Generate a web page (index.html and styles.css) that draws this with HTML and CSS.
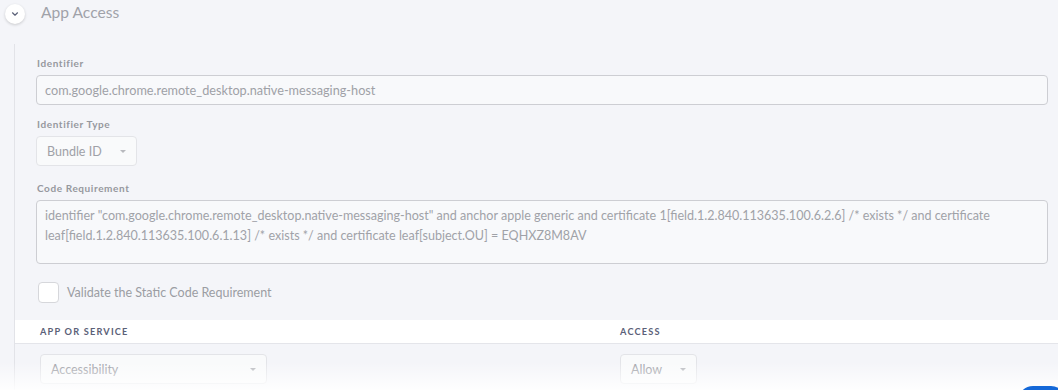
FILE: index.html
```html
<!DOCTYPE html>
<html>
<head>
<meta charset="utf-8">
<link rel="stylesheet" href="styles.css">
</head>
<body>
<div class="page">
  <div class="header">
    <div class="toggle">
      <svg width="8" height="6" viewBox="0 0 8 6"><path d="M1.5 1.8 L4 4.2 L6.5 1.8" fill="none" stroke="#5b6178" stroke-width="1.2" stroke-linecap="round" stroke-linejoin="round"/></svg>
    </div>
    <div class="title">App Access</div>
  </div>
  <div class="body">
    <div class="form">
      <div class="field">
        <div class="label">Identifier</div>
        <div class="input">com.google.chrome.remote_desktop.native-messaging-host</div>
      </div>
      <div class="field">
        <div class="label">Identifier Type</div>
        <div class="select bundle"><span>Bundle ID</span><span class="caret"></span></div>
      </div>
      <div class="field">
        <div class="label">Code Requirement</div>
        <div class="textarea">identifier "com.google.chrome.remote_desktop.native-messaging-host" and anchor apple generic and certificate 1[field.1.2.840.113635.100.6.2.6] /* exists */ and certificate leaf[field.1.2.840.113635.100.6.1.13] /* exists */ and certificate leaf[subject.OU] = EQHXZ8M8AV</div>
      </div>
      <label class="check">
        <span class="box"></span>
        <span>Validate the Static Code Requirement</span>
      </label>
    </div>
    <div class="table">
      <div class="thead">
        <div class="col1">APP OR SERVICE</div>
        <div class="col2">ACCESS</div>
      </div>
      <div class="trow">
        <div class="col1"><div class="select app"><span>Accessibility</span><span class="caret"></span></div></div>
        <div class="col2"><div class="select allow"><span>Allow</span><span class="caret"></span></div></div>
      </div>
    </div>
  </div>
  <div class="fade"></div>
  <div class="fab"></div>
</div>
</body>
</html>
```

FILE: styles.css
```css
html, body {
  margin: 0;
  padding: 0;
  background: #f4f5f9;
}
.page {
  width: 1058px;
  height: 390px;
  overflow: hidden;
  position: relative;
  font-family: Lato, "Noto Sans", sans-serif;
  color: #9a9ca3;
}
.header {
  display: flex;
  align-items: center;
  height: 26px;
  padding-left: 5px;
}
.toggle {
  width: 20px;
  height: 20px;
  border-radius: 50%;
  background: #fff;
  box-shadow: 0 1px 3px rgba(0,0,0,0.18);
  display: flex;
  align-items: center;
  justify-content: center;
  margin-top: 1px;
}
.title {
  margin-left: 16px;
  font-size: 15.6px;
  color: #a0a2a9;
  margin-top: -2px;
}
.body {
  margin-left: 14px;
  margin-top: 18px;
  border-left: 1px solid #e2e3e8;
  height: 400px;
}
.form {
  padding: 12px 10px 0 21px;
  display: flex;
  flex-direction: column;
}
.field {
  display: flex;
  flex-direction: column;
}
.label {
  font-size: 10px;
  font-weight: 700;
  letter-spacing: 0.6px;
  color: #96989e;
  height: 14px;
  line-height: 14px;
  margin-bottom: 5px;
  padding-left: 1px;
}
.input {
  height: 28px;
  border: 1px solid #cdced3;
  border-radius: 4px;
  background: #f8f9fb;
  font-size: 12.7px;
  line-height: 28px;
  padding-left: 8px;
  color: #9fa1a7;
  margin-bottom: 12px;
}
.select {
  display: flex;
  align-items: center;
  justify-content: space-between;
  height: 30px;
  border: 1px solid #e3e4e8;
  border-radius: 4px;
  background: #f9fafb;
  font-size: 12.5px;
  color: #9fa1a7;
  box-sizing: border-box;
  padding: 0 10px 0 10px;
}
.caret {
  width: 0;
  height: 0;
  border-left: 3px solid transparent;
  border-right: 3px solid transparent;
  border-top: 3px solid #b8b9be;
}
.bundle {
  width: 101px;
  margin-bottom: 15px;
}
.textarea {
  border: 1px solid #cdced3;
  border-radius: 4px;
  background: #f8f9fb;
  font-size: 12.55px;
  line-height: 20px;
  padding: 5px 14px 0 8px;
  box-sizing: border-box;
  height: 64px;
  color: #a0a2a8;
  margin-bottom: 18px;
}
.check {
  display: flex;
  align-items: center;
  font-size: 12.5px;
  color: #9b9da3;
  padding-left: 2px;
}
.box {
  width: 19px;
  height: 19px;
  border: 1px solid #d6d7db;
  border-radius: 4px;
  background: #fff;
  margin-right: 8px;
}
.table {
  margin-top: 17px;
}
.thead {
  display: flex;
  align-items: center;
  height: 23px;
  background: #fff;
  border-bottom: 1px solid #e4e5ea;
  font-size: 9.2px;
  font-weight: 700;
  letter-spacing: 1.2px;
  color: #5b6178;
}
.col1 {
  width: 580px;
  padding-left: 25px;
}
.col2 {
  flex: 1;
}
.trow {
  display: flex;
  padding-top: 10px;
}
.app {
  width: 227px;
}
.allow {
  width: 77px;
}
.fade {
  position: absolute;
  left: 0;
  right: 0;
  bottom: 0;
  height: 28px;
  background: linear-gradient(to bottom, rgba(255,255,255,0), rgba(255,255,255,0.9));
}
.fab {
  position: absolute;
  left: 1018px;
  top: 386px;
  width: 48px;
  height: 30px;
  border-radius: 24px;
  background: #1468d8;
}
```
